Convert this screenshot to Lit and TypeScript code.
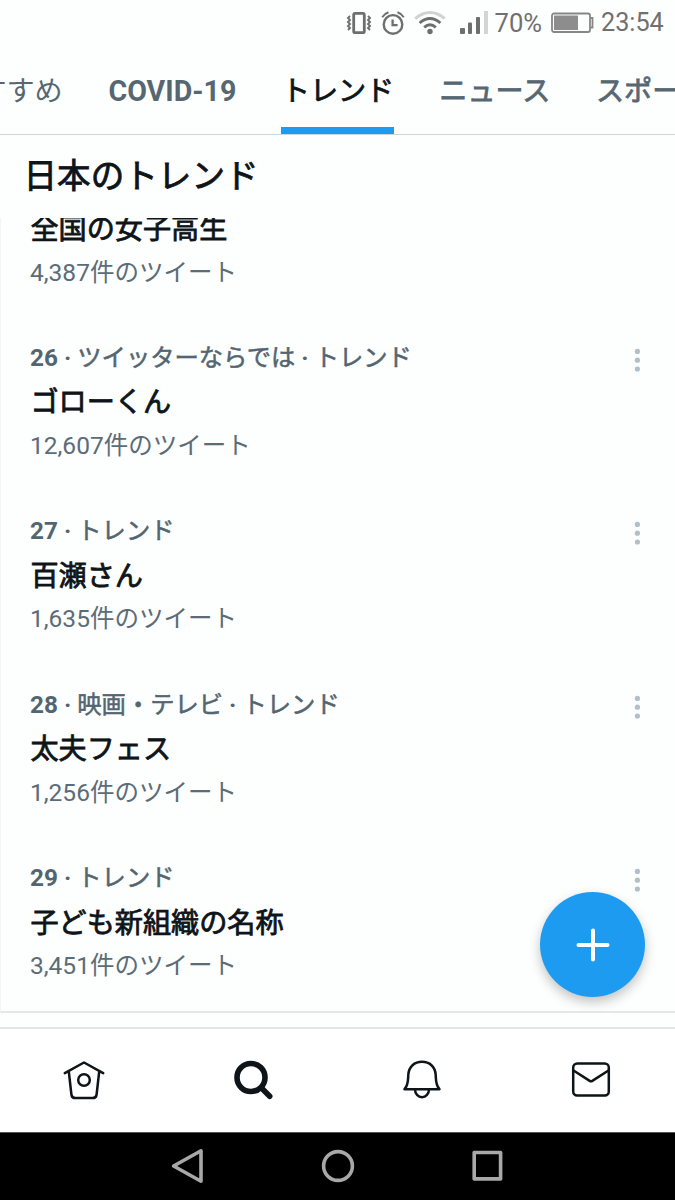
import { LitElement, html, css, svg } from "lit";
import { customElement, property } from "lit/decorators.js";

const runs = (text: string) =>
  text
    .split(/([\u3000-\u9fff]+)/)
    .filter((t) => t)
    .map((t) => (/[\u3000-\u9fff]/.test(t) ? html`<span class="jp">${t}</span>` : t));

interface Trend {
  meta: string;
  name: string;
  count: string;
}

const TRENDS: Trend[] = [
  { meta: "", name: "全国の女子高生", count: "4,387件のツイート" },
  { meta: "26 · ツイッターならでは · トレンド", name: "ゴローくん", count: "12,607件のツイート" },
  { meta: "27 · トレンド", name: "百瀬さん", count: "1,635件のツイート" },
  { meta: "28 · 映画・テレビ · トレンド", name: "太夫フェス", count: "1,256件のツイート" },
  { meta: "29 · トレンド", name: "子ども新組織の名称", count: "3,451件のツイート" },
];

@customElement("trend-item")
class TrendItem extends LitElement {
  @property({ attribute: false }) trend!: Trend;

  static styles = css`
    :host {
      display: flex;
      justify-content: space-between;
      box-sizing: border-box;
      height: 173.4px;
      flex: none;
      padding: 21.4px 28px 0 30px;
    }
    .line { height: 43.5px; line-height: 43.5px; white-space: nowrap; }
    .meta { font-size: 24.3px; font-weight: 700; color: #536570; }
    .name { font-size: 28.15px; line-height: 47px; padding-left: 0.4px; font-weight: 700; color: #0e1418; }
    .count { font-size: 24.5px; line-height: 45px; color: #5b6c77; }
    .jp { font-weight: 400; }
    .meta .jp { -webkit-text-stroke: 0.5px currentColor; }
    .name .jp { -webkit-text-stroke: 0.8px currentColor; }
    .more { width: 20px; height: 26px; margin-top: 11px; fill: #b3bfc7; }
  `;

  render() {
    const t = this.trend;
    return html`
      <div>
        <div class="line meta">${runs(t.meta)}</div>
        <div class="line name">${runs(t.name)}</div>
        <div class="line count">${t.count}</div>
      </div>
      <svg class="more" viewBox="0 0 20 26">
        <circle cx="10.4" cy="4.4" r="2.6" /><circle cx="10.4" cy="13.2" r="2.6" /><circle cx="10.4" cy="22" r="2.6" />
      </svg>
    `;
  }
}

const statusIcons = {
  vibrate: svg`<rect x="7.3" y="2.3" width="10.6" height="19.4" rx="1.5" stroke-width="2.8"/>
    <path d="M3.6 5l-2 2 2 2-2 2 2 2-2 2 2 2-2 2M21.6 5l2 2-2 2 2 2-2 2 2 2-2 2 2 2" stroke-width="1.9"/>`,
  alarm: svg`<circle cx="12" cy="13.4" r="9.3" stroke-width="2.4"/><path d="M11.6 8.600v5.500h5" stroke-width="2.3"/>
    <path d="M1.200 6.200Q3.500 2.700 7.500 1.300M22.800 6.200Q20.500 2.700 16.500 1.300" stroke-width="2"/>`,
};

@customElement("app-root")
class AppRoot extends LitElement {
  static styles = css`
    :host {
      display: flex;
      flex-direction: column;
      width: 675px;
      height: 1200px;
      overflow: hidden;
      background: #fdfefe;
      font-family: Roboto, "Noto Sans CJK JP", sans-serif;
      position: relative;
    }
    svg { display: block; flex: none; }
    .status {
      display: flex;
      align-items: center;
      height: 48px;
      flex: none;
      box-sizing: border-box;
      padding: 0 0 2px 346px;
      color: #707070;
      font-size: 25.6px;
      line-height: 50px;
    }
    .status svg { fill: none; stroke: #6e6e6e; }
    .alarm { margin-left: 9px; }
    .status .wifi { margin-left: 9px; }
    .status .signal { margin-left: 14px; stroke: none; fill: #6e6e6e; }
    .pct { width: 56px; margin-left: 6.5px; }
    .status .battery { stroke: #868686; }
    .time { margin-left: 7.5px; font-size: 25.2px; }
    .tabs {
      display: flex;
      height: 86px;
      flex: none;
      border-bottom: 1px solid #ccd6dc;
      overflow: hidden;
      color: #566772;
      font-size: 28.1px;
      font-weight: 700;
      line-height: 88px;
      white-space: nowrap;
    }
    .tab { flex: none; box-sizing: border-box; }
    .first { width: 108.5px; padding-left: 6.5px; text-indent: -28.1px; font-weight: 400; }
    .covid { width: 172.5px; font-size: 28.6px; line-height: 86px; }
    .active { width: 113px; padding-left: 0.8px; color: #0e1418; border-bottom: 7px solid #1d9bf0; }
    .news { width: 202px; padding-left: 45.3px; }
    .jp { font-weight: 400; -webkit-text-stroke: 0.8px currentColor; }
    .heading {
      height: 83px;
      flex: none;
      margin: 0;
      padding-left: 23.5px;
      box-sizing: border-box;
      color: #0e1418;
      font-size: 33.6px;
      font-weight: 400;
      line-height: 83px;
    }
    .list {
      display: flex;
      flex-direction: column;
      height: 795px;
      flex: none;
      overflow: hidden;
      border-bottom: 2px solid #e1e8eb;
      box-sizing: border-box;
      border-left: 1px solid #f1f5f7;
    }
    .scroll { margin: -76.8px 0 0 -1px; }
    .gap { height: 14px; flex: none; }
    .nav {
      display: flex;
      justify-content: space-around;
      align-items: center;
      height: 105px;
      flex: none;
      box-sizing: border-box;
      padding-bottom: 1.5px;
      border-top: 2px solid #e1e6e8;
      background: #fff;
    }
    .nav svg { fill: none; stroke: #0e1418; stroke-width: 2.5; stroke-linejoin: round; stroke-linecap: round; }
    .system {
      display: flex;
      justify-content: center;
      align-items: center;
      gap: 110px;
      flex: 1;
      padding-bottom: 1px;
      background: #000;
      border-top: 1px solid #555;
    }
    .system svg { fill: none; stroke: #a8a8a8; stroke-width: 3.6; stroke-linejoin: round; }
    .fab {
      position: absolute;
      left: 540px;
      top: 892px;
      width: 105px;
      height: 105px;
      padding: 0;
      border: 0;
      border-radius: 50%;
      background: #1d9bf0;
      box-shadow: 0 5px 12px rgba(0, 0, 0, 0.24);
    }
    .fab svg { margin: auto; stroke: #fff; stroke-width: 4; stroke-linecap: round; }
  `;

  render() {
    return html`
      <div class="status">
        <svg width="26" height="24" viewBox="0 0 25.2 24">${statusIcons.vibrate}</svg>
        <svg class="alarm" width="24" height="24" viewBox="0 0 24 24">${statusIcons.alarm}</svg>
        <svg class="wifi" width="32" height="24" viewBox="0 0 32 24" stroke-width="2.9">
          <path d="M1.2 7.6Q16-4.4 30.8 7.6" stroke="#d2d2d2" />
          <path d="M5.6 12Q16 2.8 26.4 12M10.2 16.3Q16 11.2 21.8 16.3" />
          <circle cx="16" cy="20.5" r="2.7" fill="#6e6e6e" stroke="none" />
        </svg>
        <svg class="signal" width="28" height="24" viewBox="0 0 28 24">
          <rect x="0" y="17" width="5" height="6" rx="1" /><rect x="8" y="11.5" width="4" height="11.5" rx="1" />
          <rect x="16" y="6" width="4" height="17" rx="1" /><rect x="24" y="0" width="4" height="23" fill="#d4d4d4" />
        </svg>
        <span class="pct">70%</span>
        <svg class="battery" width="43" height="22" viewBox="0 0 43 22">
          <rect x="1" y="1.5" width="38" height="18.5" rx="2" stroke-width="1.8" />
          <rect x="3" y="3.5" width="24" height="14.5" fill="#8d8d8d" stroke="none" />
          <path d="M39.5 6h2v9.5h-2" stroke-width="1.8" />
        </svg>
        <span class="time">23:54</span>
      </div>
      <div class="tabs">
        <div class="tab first">すすめ</div>
        <div class="tab covid">COVID-19</div>
        <div class="tab active">${runs("トレンド")}</div>
        <div class="tab news">${runs("ニュース")}</div>
        <div class="tab">${runs("スポー")}</div>
      </div>
      <h1 class="heading">${runs("日本のトレンド")}</h1>
      <div class="list">
        <div class="scroll">${TRENDS.map((t) => html`<trend-item .trend=${t}></trend-item>`)}</div>
      </div>
      <div class="gap"></div>
      <div class="nav">
        <svg width="42" height="42" viewBox="0 0 42 42">
          <path d="M1.8 14.2L21 3.5l19.2 10.7M5.8 12.5l2.6 23q.4 3.6 3.8 3.6h17.6q3.4 0 3.8-3.6l2.6-23" />
          <circle cx="21" cy="21" r="5.8" />
        </svg>
        <svg width="42" height="42" viewBox="0 0 42 42">
          <g stroke-width="5.6"><circle cx="19" cy="18.5" r="14" /><path d="M29.5 29l8.2 8.2" /></g>
        </svg>
        <svg width="42" height="42" viewBox="0 0 42 42">
          <path d="M3.5 30.2C7.5 26 7 21 7.3 15.8 7.8 7.6 13.5 2.8 21 2.8S34.2 7.6 34.7 15.8C35 21 34.5 26 38.5 30.2Z" />
          <path d="M14 30.5a7 7.7 0 0 0 14 0" />
        </svg>
        <svg width="42" height="42" viewBox="0 0 42 42">
          <rect x="3.2" y="4.5" width="35.6" height="32" rx="4" />
          <path d="M3.5 11.5l16.2 10.4q1.3.8 2.6 0l16.2-10.4" />
        </svg>
      </div>
      <div class="system">
        <svg width="40" height="40" viewBox="0 0 40 40"><path d="M5.6 20L33 4.8v30.4z" /></svg>
        <svg width="40" height="40" viewBox="0 0 40 40"><circle cx="20" cy="20" r="14.4" /></svg>
        <svg width="40" height="40" viewBox="0 0 40 40"><rect x="6.2" y="6.5" width="26.4" height="26.4" /></svg>
      </div>
      <button class="fab" aria-label="+">
        <svg width="36" height="36" viewBox="0 0 36 36"><path d="M18 3.5v29M3.5 18h29" /></svg>
      </button>
    `;
  }
}
